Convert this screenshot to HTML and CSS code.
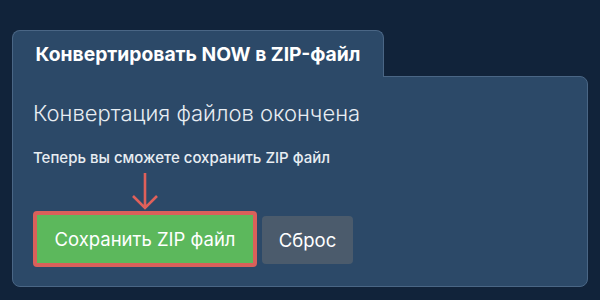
FILE: index.html
```html
<!DOCTYPE html>
<html lang="ru">
<head>
<meta charset="utf-8">
<link rel="stylesheet" href="styles.css">
</head>
<body>
<div class="widget">
  <div class="tab">Конвертировать NOW в ZIP-файл</div>
  <div class="panel">
    <h2 class="status">Конвертация файлов окончена</h2>
    <p class="hint">Теперь вы сможете сохранить ZIP файл</p>
    <div class="actions">
      <div class="save-wrap">
        <svg class="arrow" width="28" height="37" viewBox="0 0 28 37">
          <path d="M14 0 V35 M2 23 L14 35 L26 23" fill="none" stroke="#e0605a" stroke-width="2.6"/>
        </svg>
        <button class="btn btn-save">Сохранить ZIP файл</button>
      </div>
      <button class="btn btn-reset">Сброс</button>
    </div>
  </div>
</div>
</body>
</html>
```

FILE: styles.css
```css
* { box-sizing: border-box; }
html, body { margin: 0; padding: 0; }
body {
  width: 600px;
  height: 300px;
  background: #11233a;
  font-family: Inter, "Noto Sans", sans-serif;
  color: #fff;
  overflow: hidden;
}
.widget {
  padding: 30px 12px 0 12px;
  display: flex;
  flex-direction: column;
}
.tab {
  width: 372px;
  height: 47px;
  background: #2c4968;
  border: 1px solid #4a6685;
  border-bottom: none;
  border-radius: 8px 8px 0 0;
  font-weight: 700;
  font-size: 19.3px;
  line-height: 24px;
  padding-top: 11px;
  text-align: center;
  position: relative;
  z-index: 1;
}
.panel {
  width: 576px;
  height: 211px;
  margin-top: -1px;
  background: #2c4968;
  border: 1px solid #4a6685;
  border-radius: 0 8px 8px 8px;
  padding: 21px 20px 0 20px;
}
.status {
  margin: 0;
  font-weight: 300;
  font-size: 22px;
  line-height: 30px;
  color: #e8edf2;
}
.hint {
  margin: 20px 0 0 0;
  font-weight: 500;
  font-size: 15px;
  line-height: 20px;
  color: #e8edf2;
}
.actions {
  display: flex;
  align-items: flex-end;
  gap: 5px;
  margin-top: 5px;
}
.save-wrap {
  display: flex;
  flex-direction: column;
  align-items: center;
}
.arrow { display: block; margin-bottom: 1px; }
.btn {
  border: none;
  font-family: inherit;
  font-size: 18.5px;
  color: #fff;
  border-radius: 4px;
  height: 48px;
}
.btn-save {
  width: 224px;
  height: 56px;
  background: #5cb85c;
  border: 4px solid #d9605a;
  border-radius: 4px;
  padding: 0;
}
.btn-reset {
  width: 91px;
  background: #4b5b6c;
  margin-bottom: 3px;
}
```
